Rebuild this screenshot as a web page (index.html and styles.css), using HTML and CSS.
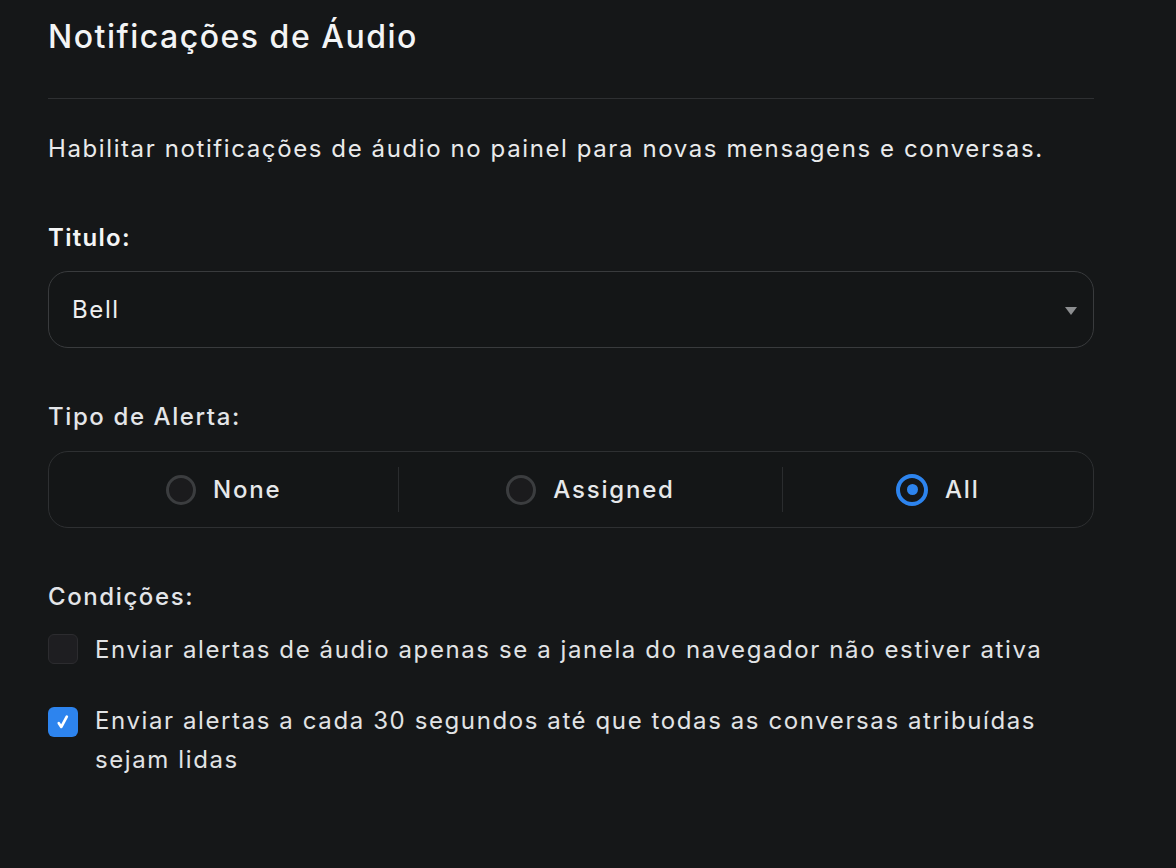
FILE: index.html
```html
<!DOCTYPE html>
<html lang="pt">
<head>
<meta charset="utf-8">
<title>Notificações de Áudio</title>
<link rel="stylesheet" href="styles.css">
</head>
<body>
<main class="panel">
  <h1 class="title">Notificações de Áudio</h1>
  <hr class="divider">
  <p class="desc">Habilitar notificações de áudio no painel para novas mensagens e conversas.</p>

  <div class="label label-strong">Titulo:</div>
  <div class="select">
    <span class="select-value">Bell</span>
    <svg class="caret" width="12" height="8" viewBox="0 0 12 8"><path d="M0 0H12L6 8Z" fill="#8c8e90"/></svg>
  </div>

  <div class="label label-gap">Tipo de Alerta:</div>
  <div class="radio-group">
    <div class="radio-item"><span class="radio"></span><span class="radio-text">None</span></div>
    <div class="radio-item"><span class="radio"></span><span class="radio-text">Assigned</span></div>
    <div class="radio-item"><span class="radio radio-on"></span><span class="radio-text">All</span></div>
  </div>

  <div class="label label-gap">Condições:</div>
  <div class="check-row first">
    <span class="check"></span>
    <span class="check-text">Enviar alertas de áudio apenas se a janela do navegador não estiver ativa</span>
  </div>
  <div class="check-row second">
    <span class="check check-on">
      <svg width="14" height="16" viewBox="0 0 14 16"><path d="M2.8 9.2 L5.3 12.9 L10.8 2.6" fill="none" stroke="#ffffff" stroke-width="2.7" stroke-linecap="round" stroke-linejoin="round"/></svg>
    </span>
    <span class="check-text">Enviar alertas a cada 30 segundos até que todas as conversas atribuídas sejam lidas</span>
  </div>
</main>
</body>
</html>
```
FILE: styles.css
```css
html, body {
  margin: 0;
  padding: 0;
  background: #151718;
}
body {
  font-family: Inter, "Noto Sans", sans-serif;
  color: #e8e9ea;
  letter-spacing: 1.6px;
}
.panel {
  width: 1046px;
  padding: 17px 0 0 48px;
}
.title {
  margin: 0;
  font-size: 32px;
  line-height: 40px;
  font-weight: 500;
  color: #f3f4f5;
  letter-spacing: 1.5px;
}
.divider {
  margin: 41px 0 0 0;
  border: 0;
  height: 1px;
  background: #2e3032;
}
.desc {
  margin: 31px 0 0 0;
  font-size: 24px;
  line-height: 38px;
  color: #e9eaeb;
}
.label {
  font-size: 24px;
  line-height: 38px;
  font-weight: 500;
  color: #e3e5e8;
}
.label-strong {
  margin-top: 51px;
  font-weight: 600;
  color: #f4f5f6;
  letter-spacing: 1.3px;
}
.label-gap {
  margin-top: 50px;
}
.select {
  margin-top: 14px;
  height: 77px;
  box-sizing: border-box;
  border: 1.5px solid #393b3d;
  border-radius: 20px;
  background: #141617;
  display: flex;
  align-items: center;
  justify-content: space-between;
  padding: 0 16px 0 23px;
}
.select-value {
  font-size: 24px;
  color: #eeeff0;
}
.caret {
  display: block;
  margin-top: 2px;
}
.radio-group {
  margin-top: 15px;
  height: 77px;
  box-sizing: border-box;
  border: 1.5px solid #2e3032;
  border-radius: 20px;
  background: #141617;
  display: grid;
  grid-template-columns: 350fr 384fr 312fr;
  align-items: center;
}
.radio-item {
  display: flex;
  align-items: center;
  justify-content: center;
  gap: 17px;
  height: 45px;
  border-left: 1.5px solid #2a2c2e;
}
.radio-item:first-child {
  border-left: 0;
}
.radio {
  width: 30px;
  height: 30px;
  box-sizing: border-box;
  border-radius: 50%;
  border: 3px solid #3b3d3f;
  background: #1b1b1d;
}
.radio-on {
  width: 32px;
  height: 32px;
  border: 4px solid #2d84ee;
  background: #151718;
  position: relative;
}
.radio-on::after {
  content: "";
  position: absolute;
  left: 50%;
  top: 50%;
  width: 11px;
  height: 11px;
  margin: -5.5px 0 0 -5.5px;
  border-radius: 50%;
  background: #2d84ee;
}
.radio-text {
  font-size: 24px;
  font-weight: 500;
  color: #e6e8ea;
  letter-spacing: 1.8px;
}
.check-row {
  display: flex;
  align-items: flex-start;
  gap: 17px;
}
.check-row.first {
  margin-top: 14px;
}
.check-row.second {
  margin-top: 32px;
}
.check {
  flex: 0 0 30px;
  width: 30px;
  height: 30px;
  box-sizing: border-box;
  margin-top: 4px;
  border-radius: 6px;
  border: 1.5px solid #2c2c2f;
  background: #1e1e21;
  display: flex;
  align-items: center;
  justify-content: center;
}
.check-on {
  margin-top: 6px;
  border: 0;
  background: #2d84ee;
}
.check-on svg {
  display: block;
}
.check-text {
  font-size: 24px;
  line-height: 39px;
  color: #e1e3e5;
}
```
